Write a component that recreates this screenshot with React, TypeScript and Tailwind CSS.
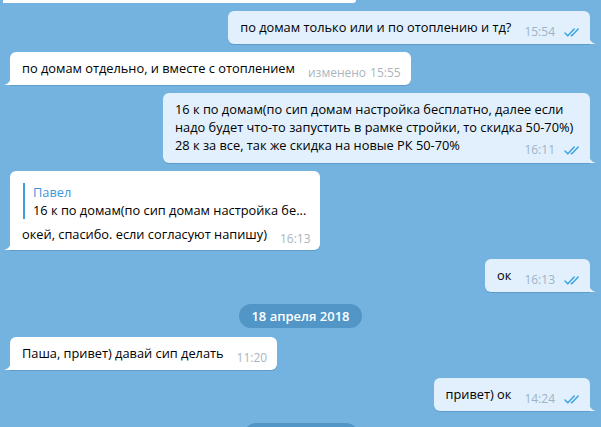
import type { ReactNode } from "react";

const font = { fontFamily: '"Open Sans", "Noto Sans", sans-serif' };

function Checks() {
  return (
    <svg width="17" height="9" viewBox="0 0 17 9" className="ml-[9px]" fill="none">
      <path d="M1 5 L3.8 7.8 L10.2 1" stroke="#45a6e3" strokeWidth="1.6" strokeLinecap="round" strokeLinejoin="round" />
      <path d="M7.4 7.4 L7.8 7.8 L14.2 1" stroke="#45a6e3" strokeWidth="1.6" strokeLinecap="round" strokeLinejoin="round" />
    </svg>
  );
}

function Tail({ out }: { out: boolean }) {
  return out ? (
    <svg width="7" height="8" viewBox="0 0 7 8" className="absolute bottom-0 right-[-6px]">
      <path d="M0 0 C0.5 4.5 3 7 7 8 L0 8 Z" fill="#e1f0fc" />
    </svg>
  ) : (
    <svg width="7" height="8" viewBox="0 0 7 8" className="absolute bottom-0 left-[-6px]">
      <path d="M7 0 C6.5 4.5 4 7 0 8 L7 8 Z" fill="#ffffff" />
    </svg>
  );
}

function Meta({ time, out, edited }: { time: string; out?: boolean; edited?: boolean }) {
  return (
    <span
      className={`relative top-[4px] ml-[13px] flex shrink-0 items-center whitespace-nowrap text-[12px] leading-[16px] ${
        out ? "text-[#9cb4c8]" : "text-[#abb5be]"
      }`}
    >
      {edited && <span className="mr-[4px]">изменено</span>}
      {time}
      {out && <Checks />}
    </span>
  );
}

function Bubble({
  out,
  time,
  edited,
  className = "",
  children,
}: {
  out?: boolean;
  time: string;
  edited?: boolean;
  className?: string;
  children: ReactNode;
}) {
  return (
    <div className={`flex ${out ? "justify-end pr-[11px]" : "justify-start pl-[10px]"} ${className}`}>
      <div
        className={`relative flex items-baseline whitespace-nowrap pl-[12px] pt-[7px] pb-[8px] text-[12.8px] leading-[18px] text-black shadow-[0_1px_0_rgba(44,100,150,0.28)] ${
          out
            ? "rounded-[6px] rounded-br-none bg-[#e1f0fc] pr-[9px]"
            : "rounded-[6px] rounded-bl-none bg-white pr-[10px]"
        }`}
      >
        <span>{children}</span>
        <Meta time={time} out={out} edited={edited} />
        <Tail out={!!out} />
      </div>
    </div>
  );
}

function DatePill({ text, className = "" }: { text?: string; className?: string }) {
  return (
    <div className={`flex justify-center ${className}`}>
      <div className="h-[24px] min-w-[114px] rounded-full bg-[#5196c6] px-[12px] text-center text-[13px] font-semibold leading-[24px] text-white">
        {text}
      </div>
    </div>
  );
}

export default function App() {
  return (
    <div className="h-[427px] w-[601px] overflow-hidden bg-[#74b2df]" style={font}>
      {/* previous message, cut off */}
      <div className="ml-[3px] h-[3px] w-[353px] rounded-br-[4px] bg-white" />

      <Bubble out time="15:54" className="mt-[8px]">
        по домам только или и по отоплению и тд?
      </Bubble>

      <Bubble time="15:55" edited className="mt-[8px]">
        по домам отдельно, и вместе с отоплением
      </Bubble>

      {/* long outgoing */}
      <div className="mt-[8px] flex justify-end pr-[11px]">
        <div className="relative w-[427px] rounded-[6px] rounded-br-none bg-[#e1f0fc] pl-[12px] pr-[9px] pt-[7px] pb-[9px] text-[12.8px] leading-[18px] text-black shadow-[0_1px_0_rgba(44,100,150,0.28)]">
          <div className="whitespace-nowrap">16 к по домам(по сип домам настройка бесплатно, далее если</div>
          <div className="whitespace-nowrap">надо будет что-то запустить в рамке стройки, то скидка 50-70%)</div>
          <div className="flex items-baseline justify-between whitespace-nowrap">
            <span>28 к за все, так же скидка на новые РК 50-70%</span>
            <Meta out time="16:11" />
          </div>
          <Tail out />
        </div>
      </div>

      {/* reply */}
      <div className="mt-[8px] flex justify-start pl-[10px]">
        <div className="relative w-[310px] rounded-[6px] rounded-bl-none bg-white pl-[12px] pr-[11px] pt-[12px] pb-[7px] text-[12.8px] text-black shadow-[0_1px_0_rgba(44,100,150,0.28)]">
          <div className="ml-[1px] border-l-2 border-[#3d9fe0] pl-[8px]">
            <div className="leading-[19px] text-[#3d97d6]">Павел</div>
            <div className="whitespace-nowrap leading-[17px]">16 к по домам(по сип домам настройка бе...</div>
          </div>
          <div className="mt-[6px] flex items-baseline justify-between whitespace-nowrap leading-[18px]">
            <span>окей, спасибо. если согласуют напишу)</span>
            <Meta time="16:13" />
          </div>
          <Tail out={false} />
        </div>
      </div>

      <Bubble out time="16:13" className="mt-[9px]">
        ок
      </Bubble>

      <DatePill text="18 апреля 2018" className="mt-[12px]" />

      <Bubble time="11:20" className="mt-[9px]">
        Паша, привет) давай сип делать
      </Bubble>

      <Bubble out time="14:24" className="mt-[8px]">
        привет) ок
      </Bubble>

      <DatePill className="mt-[12px]" />
    </div>
  );
}
